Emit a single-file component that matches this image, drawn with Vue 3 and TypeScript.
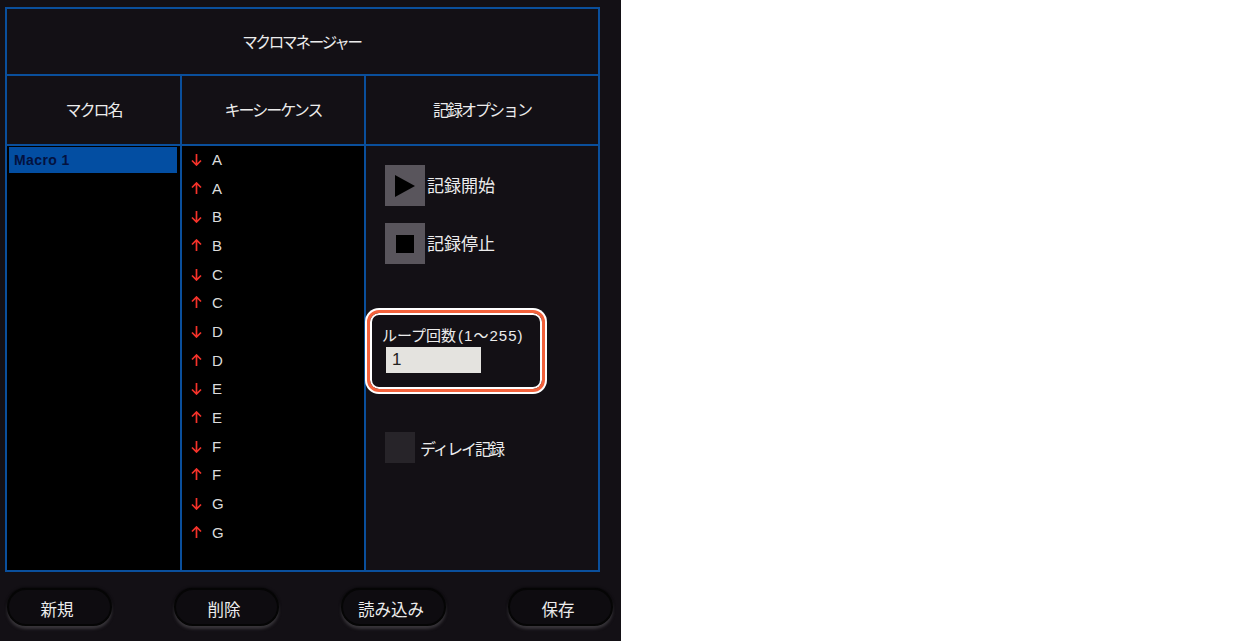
<script setup lang="ts">
const letters = ['A', 'B', 'C', 'D', 'E', 'F', 'G']
const seq = letters.flatMap((l) => [
  { key: l, down: true },
  { key: l, down: false },
])
const buttons = ['新規', '削除', '読み込み', '保存']
</script>

<template>
  <div class="page">
    <div class="panel">
      <div class="table">
        <div class="title">マクロマネージャー</div>
        <div class="head first">マクロ名</div>
        <div class="head second">キーシーケンス</div>
        <div class="head third">記録オプション</div>

        <div class="names">
          <div class="macro">Macro 1</div>
        </div>

        <div class="sequence">
          <div v-for="(s, i) in seq" :key="i" class="step">
            <svg class="arrow" width="11" height="13" viewBox="0 0 11 13">
              <path
                v-if="s.down"
                d="M5.5 1V12M1 7.5L5.5 12L10 7.5"
                fill="none"
                stroke="#f5322a"
                stroke-width="1.7"
              />
              <path
                v-else
                d="M5.5 12V1M1 5.5L5.5 1L10 5.5"
                fill="none"
                stroke="#f5322a"
                stroke-width="1.7"
              />
            </svg>
            <span>{{ s.key }}</span>
          </div>
        </div>

        <div class="options">
          <div class="rec">
            <div class="icon-btn">
              <svg width="20" height="22" viewBox="0 0 20 22"><path d="M0 0L20 11L0 22Z" fill="#000" /></svg>
            </div>
            <span class="rec-text">記録開始</span>
          </div>
          <div class="rec stop">
            <div class="icon-btn">
              <svg width="18" height="18" viewBox="0 0 18 18"><rect width="18" height="18" fill="#000" /></svg>
            </div>
            <span class="rec-text">記録停止</span>
          </div>
          <div class="loop">
            <div class="loop-label">ループ回数<span class="range">(1～255)</span></div>
            <div class="loop-input">1</div>
          </div>
          <div class="delay">
            <div class="check"></div>
            <span class="delay-text">ディレイ記録</span>
          </div>
        </div>
      </div>

      <div class="footer">
        <button v-for="b in buttons" :key="b" class="pill" type="button">{{ b }}</button>
      </div>
    </div>
  </div>
</template>

<style>
html,
body {
  margin: 0;
  background: #fff;
}
</style>

<style scoped>
.page {
  width: 1240px;
  height: 641px;
  background: #fff;
  overflow: hidden;
  font-family: 'Liberation Sans', 'Noto Sans CJK JP', sans-serif;
}
.panel {
  width: 621px;
  height: 641px;
  box-sizing: border-box;
  padding: 7px 21px 0 5px;
  background: #131015;
  color: #ececec;
}
.table {
  width: 595px;
  height: 565px;
  box-sizing: border-box;
  display: grid;
  grid-template-columns: 175px 184px 1fr;
  grid-template-rows: 67px 70px 1fr;
  border: 2px solid #0a4f9c;
}
.title {
  grid-column: 1 / 4;
  display: flex;
  align-items: center;
  justify-content: center;
  font-size: 15.5px;
  letter-spacing: -2.2px;
  padding: 0 2px 2px 0;
  border-bottom: 2px solid #0a4f9c;
}
.head {
  display: flex;
  align-items: center;
  justify-content: center;
  font-size: 16px;
  letter-spacing: -2px;
  padding-bottom: 2px;
  box-sizing: border-box;
  border-bottom: 2px solid #0a4f9c;
}
.first,
.second {
  border-right: 2px solid #0a4f9c;
}
.names {
  background: #000;
  border-right: 2px solid #0a4f9c;
  padding: 1px 3px 0 2px;
}
.macro {
  height: 26px;
  line-height: 26px;
  padding-left: 5px;
  background: #034ea2;
  color: #03123f;
  font-size: 14px;
  font-weight: 700;
  letter-spacing: 0.4px;
}
.sequence {
  background: #000;
  border-right: 2px solid #0a4f9c;
}
.step {
  height: 28.7px;
  display: flex;
  align-items: center;
  padding-left: 9px;
  font-size: 15px;
  color: #dcdcdc;
}
.step span {
  margin-top: -2px;
}
.arrow {
  margin-right: 10px;
  margin-top: -2px;
}
.options {
  padding: 19px 0 0 19px;
  font-size: 14px;
}
.rec {
  display: flex;
  align-items: center;
  gap: 2px;
}
.rec-text {
  font-size: 17px;
  margin-top: -3px;
}
.stop {
  margin-top: 17px;
}
.icon-btn {
  width: 40px;
  height: 41px;
  background: #59555c;
  display: flex;
  align-items: center;
  justify-content: center;
}
.loop {
  box-sizing: border-box;
  width: 178px;
  height: 82px;
  margin: 46px 0 0 -18px;
  padding: 13px 0 0 12px;
  background: #131015;
  border: 3px solid #f4623c;
  border-radius: 12px;
  box-shadow: 0 0 0 2px #fff, inset 0 0 0 2px #fff;
}
.loop-label {
  font-size: 15px;
  line-height: 20px;
  white-space: nowrap;
}
.range {
  margin-left: 2px;
  letter-spacing: 1px;
}
.loop-input {
  width: 95px;
  height: 26px;
  margin-top: 1px;
  margin-left: 4px;
  padding-left: 6px;
  box-sizing: border-box;
  background: #e4e3df;
  color: #222;
  font-size: 17px;
  line-height: 26px;
}
.delay {
  display: flex;
  align-items: center;
  gap: 5px;
  margin-top: 40px;
}
.delay-text {
  font-size: 16px;
  letter-spacing: -2px;
}
.check {
  width: 30px;
  height: 31px;
  background: #272429;
}
.footer {
  display: flex;
  justify-content: space-between;
  width: 606px;
  margin-top: 16px;
  margin-left: 2px;
}
.pill {
  width: 105px;
  height: 38px;
  padding: 3px 5px 0 0;
  border: 2px solid #050505;
  border-radius: 19px;
  background: #0e0c10;
  box-shadow: 0 3px 3px #38353a, 0 0 3px #000;
  color: #ececec;
  font: 16.5px 'Liberation Sans', 'Noto Sans CJK JP', sans-serif;
}
</style>
